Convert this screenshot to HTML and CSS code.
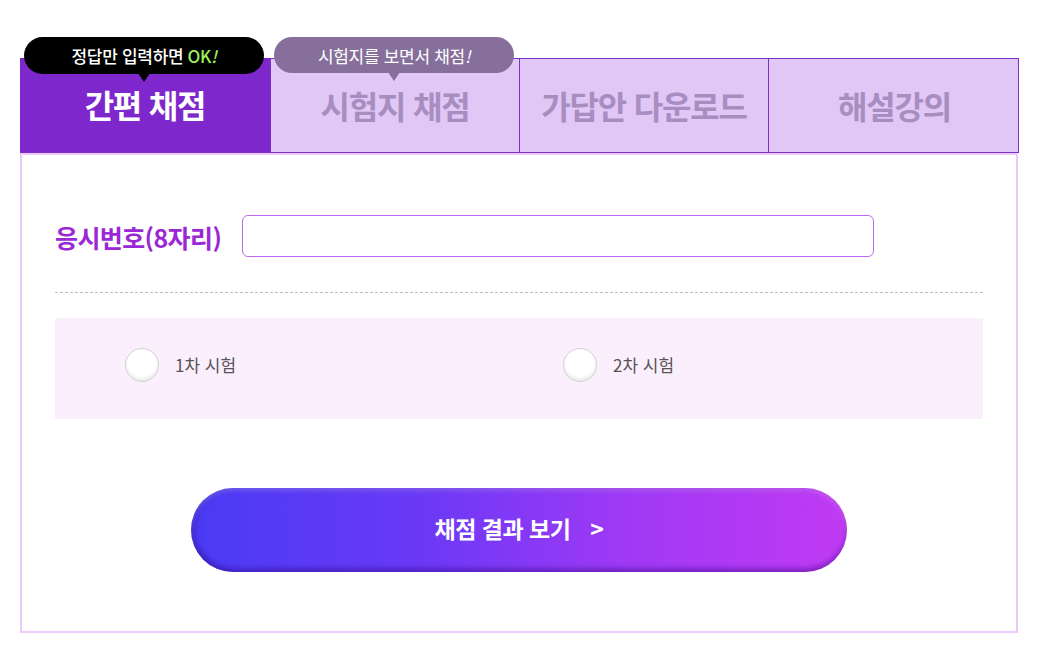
FILE: index.html
```html
<!DOCTYPE html>
<html lang="ko">
<head>
<meta charset="utf-8">
<title>채점</title>
<link rel="stylesheet" href="styles.css">
</head>
<body>
<div class="wrap">
  <div class="tabs">
    <div class="tab active">간편 채점</div>
    <div class="tab">시험지 채점</div>
    <div class="tab">가답안 다운로드</div>
    <div class="tab last">해설강의</div>
    <div class="tip tip-black">정답만 입력하면 <span class="ok">OK<i>!</i></span></div>
    <div class="tip tip-gray">시험지를 보면서 채점<i>!</i></div>
  </div>
  <div class="panel">
    <div class="row">
      <label class="label" for="num">응시번호(8자리)</label>
      <input class="input" id="num" type="text">
    </div>
    <div class="divider"></div>
    <div class="radios">
      <label class="radio"><span class="circle"></span><span class="rtext">1차 시험</span></label>
      <label class="radio"><span class="circle"></span><span class="rtext">2차 시험</span></label>
    </div>
    <div class="btn-row">
      <button class="btn" type="button">채점 결과 보기 <span class="arrow">&gt;</span></button>
    </div>
  </div>
</div>
</body>
</html>
```

FILE: styles.css
```css
* { box-sizing: border-box; }
html, body { margin: 0; padding: 0; background: #fff; }
body { font-family: "Noto Sans CJK KR", "Noto Sans", sans-serif; }

.wrap {
  width: 999px;
  margin: 58px 0 0 20px;
}

.tabs {
  position: relative;
  display: grid;
  grid-template-columns: 250px 249px 249px 251px;
  height: 95px;
  border: 1px solid #7a30c8;
  background: #e0c7f6;
}
.tab {
  display: flex;
  align-items: center;
  justify-content: center;
  padding-bottom: 2px;
  font-size: 32px;
  font-weight: 700;
  letter-spacing: -1.2px;
  color: #a88dc0;
  border-right: 1px solid #7a30c8;
}
.tab.last { border-right: none; }
.tab.active {
  background: #7e27cd;
  color: #fff;
  margin: -1px 0 0 -1px;
}

.tip {
  position: absolute;
  top: -22px;
  height: 37px;
  width: 240px;
  border-radius: 19px;
  color: #fff;
  display: flex;
  align-items: center;
  justify-content: center;
  letter-spacing: -0.3px;
  font-size: 17px;
}
.tip i { font-style: italic; }
.tip::after {
  content: "";
  position: absolute;
  left: 50%;
  bottom: -8px;
  margin-left: -6px;
  border-left: 6px solid transparent;
  border-right: 6px solid transparent;
  border-top: 9px solid currentColor;
}
.tip-black {
  left: 3px;
  background: #000;
  font-weight: 500;
}
.tip-black::after { border-top-color: #000; }
.ok { color: #9cf15c; margin-left: 4px; }
.tip-gray {
  left: 253px;
  background: #86709b;
  height: 36px;
}
.tip-gray::after { border-top-color: #86709b; }

.panel {
  width: 998px;
  border: 2px solid #eccafa;
  padding: 60px 33px 59px 33px;
}

.row {
  display: flex;
  align-items: center;
  height: 42px;
}
.label {
  width: 187px;
  flex: none;
  font-size: 25px;
  font-weight: 700;
  letter-spacing: -0.6px;
  color: #9a28d4;
  padding-top: 2px;
}
.input {
  width: 632px;
  height: 42px;
  border: 1px solid #c464f5;
  border-radius: 6px;
  outline: none;
  padding: 0 12px;
  font-size: 18px;
  font-family: inherit;
}

.divider {
  margin-top: 35px;
  border-top: 1px dashed #bdbdbd;
}

.radios {
  margin-top: 25px;
  height: 101px;
  background: #fbeefd;
  display: grid;
  grid-template-columns: 438px 1fr;
  align-items: center;
  padding-left: 70px;
  padding-bottom: 7px;
}
.radio {
  display: flex;
  align-items: center;
  gap: 16px;
}
.circle {
  width: 34px;
  height: 34px;
  border-radius: 50%;
  border: 1px solid #d2d2d2;
  background: radial-gradient(circle at 50% 35%, #ffffff 55%, #f0f0f0 100%);
  box-shadow: inset 0 -2px 3px rgba(0,0,0,0.06);
}
.rtext {
  font-size: 17px;
  color: #555;
  margin-top: -2px;
}

.btn-row {
  margin-top: 69px;
  display: flex;
  justify-content: center;
}
.btn {
  width: 656px;
  height: 84px;
  border: none;
  border-radius: 42px;
  background: linear-gradient(90deg, #4a3bf4 0%, #6a39f6 35%, #9e39f5 65%, #c13af3 100%);
  box-shadow: inset 0 -4px 5px rgba(50, 0, 130, 0.35), inset 0 3px 4px rgba(255,255,255,0.18), inset 5px 0 6px rgba(40,0,120,0.2);
  color: #fff;
  font-family: inherit;
  font-size: 23px;
  font-weight: 700;
  letter-spacing: -0.5px;
  padding: 0 0 4px 0;
}
.arrow { margin-left: 14px; }
```
